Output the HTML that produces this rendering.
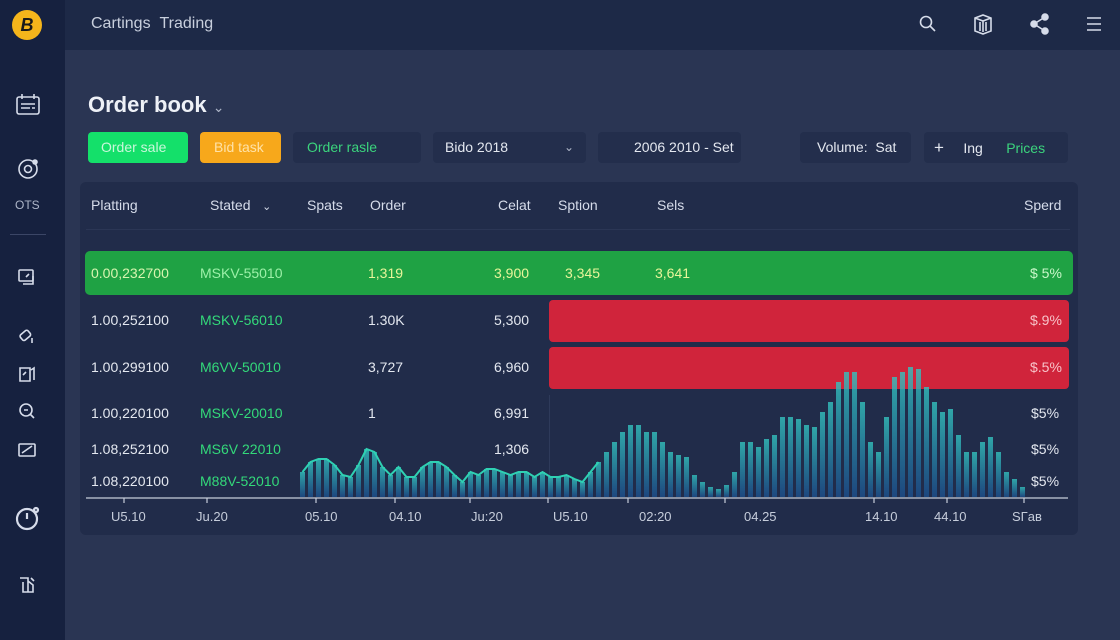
<!DOCTYPE html>
<html><head><meta charset="utf-8"><style>
*{margin:0;padding:0;box-sizing:border-box}
body{width:1120px;height:640px;overflow:hidden;background:#2a3553;font-family:"Liberation Sans",sans-serif;position:relative;color:#e4e8f0}
.a{position:absolute}
.side{left:0;top:0;width:65px;height:640px;background:#16213f}
.top{left:65px;top:0;width:1055px;height:50px;background:#1d2947}
.btn{position:absolute;top:132px;height:31px;border-radius:4px;font-size:14px;line-height:31px;background:#232e4c;color:#e4e8f0}
.panel{left:80px;top:182px;width:998px;height:353px;background:#212c4a;border-radius:6px}
.t{position:absolute;font-size:14px;white-space:nowrap}
.g{color:#33d97a}
.ax{position:absolute;top:509px;font-size:13px;color:#c6cddb}
svg.ic{position:absolute;fill:none;stroke:#d6dcea;stroke-width:1.6}
</style></head><body>
<div class="a side"></div>
<div class="a top"></div>
<!-- logo -->
<div class="a" style="left:12px;top:10px;width:30px;height:30px;border-radius:50%;background:#f5b51b;color:#1a1a1a;font-weight:bold;font-size:18px;text-align:center;line-height:30px;font-style:italic">B</div>
<!-- sidebar icons -->
<svg class="ic" style="left:15px;top:92px" width="26" height="26" viewBox="0 0 26 26"><rect x="2" y="5" width="22" height="17" rx="2"/><path d="M7 2v5M19 2v5M6 12h14M6 16h9M17 16h3"/></svg>
<svg class="ic" style="left:16px;top:157px" width="24" height="24" viewBox="0 0 24 24"><circle cx="12" cy="12" r="9"/><circle cx="12" cy="12" r="3.5"/><circle cx="19" cy="5" r="2" fill="#d6dcea"/></svg>
<div class="t" style="left:15px;top:198px;font-size:12px;color:#aeb6c8">OTS</div>
<div class="a" style="left:10px;top:234px;width:36px;height:1px;background:#3b4666"></div>
<svg class="ic" style="left:17px;top:268px" width="20" height="20" viewBox="0 0 20 20"><rect x="2" y="2" width="14" height="11" rx="1"/><path d="M6 16h10v-8M9 9l3-3"/></svg>
<svg class="ic" style="left:17px;top:326px" width="20" height="20" viewBox="0 0 20 20"><rect x="3" y="6" width="10" height="7" rx="2" transform="rotate(-40 8 9)"/><path d="M15 12v5"/></svg>
<svg class="ic" style="left:17px;top:364px" width="20" height="20" viewBox="0 0 20 20"><path d="M3 4h10v13H3zM6 11l3-3M14 6l3-2v12"/></svg>
<svg class="ic" style="left:17px;top:401px" width="20" height="20" viewBox="0 0 20 20"><circle cx="9" cy="9" r="6"/><path d="M13 13l4 4M7 9h4"/></svg>
<svg class="ic" style="left:17px;top:440px" width="20" height="20" viewBox="0 0 20 20"><rect x="2" y="4" width="16" height="12" rx="1"/><path d="M5 13l10-7"/></svg>
<svg class="ic" style="left:14px;top:504px;stroke-width:2.2" width="28" height="28" viewBox="0 0 28 28"><circle cx="13" cy="15" r="10"/><path d="M13 9v6"/><circle cx="22" cy="6" r="2"/></svg>
<svg class="ic" style="left:17px;top:575px" width="20" height="20" viewBox="0 0 20 20"><path d="M3 3h8v14H6V7M11 6l5 4v7h-5M14 3l3 3"/></svg>
<!-- top -->
<div class="t" style="left:91px;top:15px;font-size:16px;color:#c8cfdd">Cartings&nbsp;&nbsp;Trading</div>
<svg class="ic" style="left:918px;top:14px" width="20" height="20" viewBox="0 0 20 20"><circle cx="8" cy="8" r="5.5"/><path d="M12 12l5 5"/></svg>
<svg class="ic" style="left:972px;top:12px" width="22" height="24" viewBox="0 0 22 24"><path d="M3 6l8-3 8 3v13l-8 3-8-3zM3 6l8 3 8-3M8 10v9M11 9v11M14 10v9"/></svg>
<svg class="ic" style="left:1030px;top:13px;fill:#d6dcea" width="20" height="22" viewBox="0 0 20 22"><circle cx="15" cy="4" r="3"/><circle cx="4" cy="11" r="3"/><circle cx="15" cy="18" r="3"/><path d="M4 11l11-7M4 11l11 7" fill="none"/></svg>
<svg class="ic" style="left:1085px;top:15px" width="18" height="18" viewBox="0 0 18 18"><path d="M2 3h14M2 9h14M2 15h14"/></svg>
<!-- title -->
<div class="t" style="left:88px;top:92px;font-size:22px;font-weight:bold;color:#eef1f7">Order book <span style="font-size:14px;color:#aeb6c8;font-weight:normal">&#8964;</span></div>
<!-- filters -->
<div class="btn" style="left:88px;width:100px;background:#14e06a;color:#c9f7da;padding-left:13px">Order sale</div>
<div class="btn" style="left:200px;width:81px;background:#f7a81b;color:#ffe2a8;padding-left:14px">Bid task</div>
<div class="btn" style="left:293px;width:128px;color:#3bd47d;padding-left:14px">Order rasle</div>
<div class="btn" style="left:433px;width:153px;padding-left:12px">Bido 2018<span style="position:absolute;right:12px;font-size:12px;color:#aeb6c8">&#8964;</span></div>
<div class="btn" style="left:598px;width:143px;padding-left:36px">2006 2010 - Set</div>
<div class="btn" style="left:800px;width:111px;padding-left:17px">Volume:&nbsp; Sat</div>
<div class="btn" style="left:924px;width:144px;padding-left:10px"><span style="font-size:17px">+</span>&nbsp;&nbsp;&nbsp;&nbsp; Ing &nbsp;&nbsp;&nbsp;&nbsp;&nbsp;<span style="color:#3bd47d">Prices</span></div>
<!-- panel -->
<div class="a panel"></div>
<div class="a" style="left:86px;top:229px;width:984px;height:1px;background:#2b3655"></div>
<div class="t" style="left:91px;top:197px;color:#d6dcea">Platting</div>
<div class="t" style="left:210px;top:197px;color:#d6dcea">Stated &nbsp;&nbsp;<span style="font-size:11px">&#8964;</span></div>
<div class="t" style="left:307px;top:197px;color:#d6dcea">Spats</div>
<div class="t" style="left:370px;top:197px;color:#d6dcea">Order</div>
<div class="t" style="left:498px;top:197px;color:#d6dcea">Celat</div>
<div class="t" style="left:558px;top:197px;color:#d6dcea">Sption</div>
<div class="t" style="left:657px;top:197px;color:#d6dcea">Sels</div>
<div class="t" style="left:1024px;top:197px;color:#d6dcea">Sperd</div>
<!-- rows -->
<div class="a" style="left:85px;top:251px;width:988px;height:44px;background:#1fa244;border-radius:5px"></div>
<div class="a" style="left:549px;top:300px;width:520px;height:42px;background:#d0243b;border-radius:4px"></div>
<div class="a" style="left:549px;top:347px;width:520px;height:42px;background:#d0243b;border-radius:4px"></div>
<div class="a" style="left:549px;top:395px;width:1px;height:100px;background:#2e3a5a"></div>

<div class="t" style="left:91px;top:265px;color:#d8f5b0">0.00,232700</div>
<div class="t g" style="left:200px;top:265px;color:#9cf0a8">MSKV-55010</div>
<div class="t" style="left:368px;top:265px;color:#e8f59a">1,319</div>
<div class="t" style="left:494px;top:265px;color:#e8f59a">3,900</div>
<div class="t" style="left:565px;top:265px;color:#e8f59a">3,345</div>
<div class="t" style="left:655px;top:265px;color:#e8f59a">3,641</div>
<div class="t" style="left:1030px;top:265px;color:#c9f7c9">$ 5%</div>

<div class="t" style="left:91px;top:312px">1.00,252100</div>
<div class="t g" style="left:200px;top:312px">MSKV-56010</div>
<div class="t" style="left:368px;top:312px">1.30K</div>
<div class="t" style="left:494px;top:312px">5,300</div>
<div class="t" style="left:1030px;top:312px;color:#f7c2c8">$.9%</div>

<div class="t" style="left:91px;top:359px">1.00,299100</div>
<div class="t g" style="left:200px;top:359px">M6VV-50010</div>
<div class="t" style="left:368px;top:359px">3,727</div>
<div class="t" style="left:494px;top:359px">6,960</div>
<div class="t" style="left:1030px;top:359px;color:#f7c2c8">$.5%</div>

<div class="t" style="left:91px;top:405px">1.00,220100</div>
<div class="t g" style="left:200px;top:405px">MSKV-20010</div>
<div class="t" style="left:368px;top:405px">1</div>
<div class="t" style="left:494px;top:405px">6,991</div>
<div class="t" style="left:1031px;top:405px">$5%</div>

<div class="t" style="left:91px;top:441px">1.08,252100</div>
<div class="t g" style="left:200px;top:441px">MS6V 22010</div>
<div class="t" style="left:494px;top:441px">1,306</div>
<div class="t" style="left:1031px;top:441px">$5%</div>

<div class="t" style="left:91px;top:473px">1.08,220100</div>
<div class="t g" style="left:200px;top:473px">M88V-52010</div>
<div class="t" style="left:1031px;top:473px">$5%</div>

<svg class="a" style="left:0;top:0" width="1120" height="640" viewBox="0 0 1120 640">
<defs><linearGradient id="bg" x1="0" y1="0" x2="0" y2="1"><stop offset="0" stop-color="#34c4c0"/><stop offset="1" stop-color="#1d4e8c"/></linearGradient></defs>
<g fill="url(#bg)" opacity="0.8" id="bars"></g>
<polyline id="ln" fill="none" stroke="#2fd1b3" stroke-width="2"/>
<line x1="86" y1="498" x2="1068" y2="498" stroke="#c6cddb" stroke-width="1.2"/>
<g stroke="#c6cddb" stroke-width="1.2">
<line x1="124" y1="498" x2="124" y2="503"/><line x1="207" y1="498" x2="207" y2="503"/><line x1="316" y1="498" x2="316" y2="503"/><line x1="395" y1="498" x2="395" y2="503"/><line x1="470" y1="498" x2="470" y2="503"/><line x1="548" y1="498" x2="548" y2="503"/><line x1="628" y1="498" x2="628" y2="503"/><line x1="725" y1="498" x2="725" y2="503"/><line x1="874" y1="498" x2="874" y2="503"/><line x1="947" y1="498" x2="947" y2="503"/><line x1="1024" y1="498" x2="1024" y2="503"/>
</g>
</svg>
<script>
var h=[25,35,38,38,32,22,20,32,48,45,30,22,30,20,20,30,35,35,30,22,15,25,22,28,28,25,22,25,25,20,25,20,20,22,18,15,25,35,45,55,65,72,72,65,65,55,45,42,40,22,15,10,8,12,25,55,55,50,58,62,80,80,78,72,70,85,95,115,125,125,95,55,45,80,120,125,130,128,110,95,85,88,62,45,45,55,60,45,25,18,10];
var g=document.getElementById('bars'),s='',p=[];
for(var i=0;i<h.length;i++){var x=300+i*8;s+='<rect x="'+x+'" y="'+(497-h[i])+'" width="5" height="'+h[i]+'"/>';if(i<=37)p.push((x+2.5)+','+(497-h[i]));}
g.innerHTML=s;document.getElementById('ln').setAttribute('points',p.join(' '));
</script>
<div class="ax" style="left:111px">U5.10</div>
<div class="ax" style="left:196px">Ju.20</div>
<div class="ax" style="left:305px">05.10</div>
<div class="ax" style="left:389px">04.10</div>
<div class="ax" style="left:471px">Ju:20</div>
<div class="ax" style="left:553px">U5.10</div>
<div class="ax" style="left:639px">02:20</div>
<div class="ax" style="left:744px">04.25</div>
<div class="ax" style="left:865px">14.10</div>
<div class="ax" style="left:934px">44.10</div>
<div class="ax" style="left:1012px">SГaв</div>
</body></html>
